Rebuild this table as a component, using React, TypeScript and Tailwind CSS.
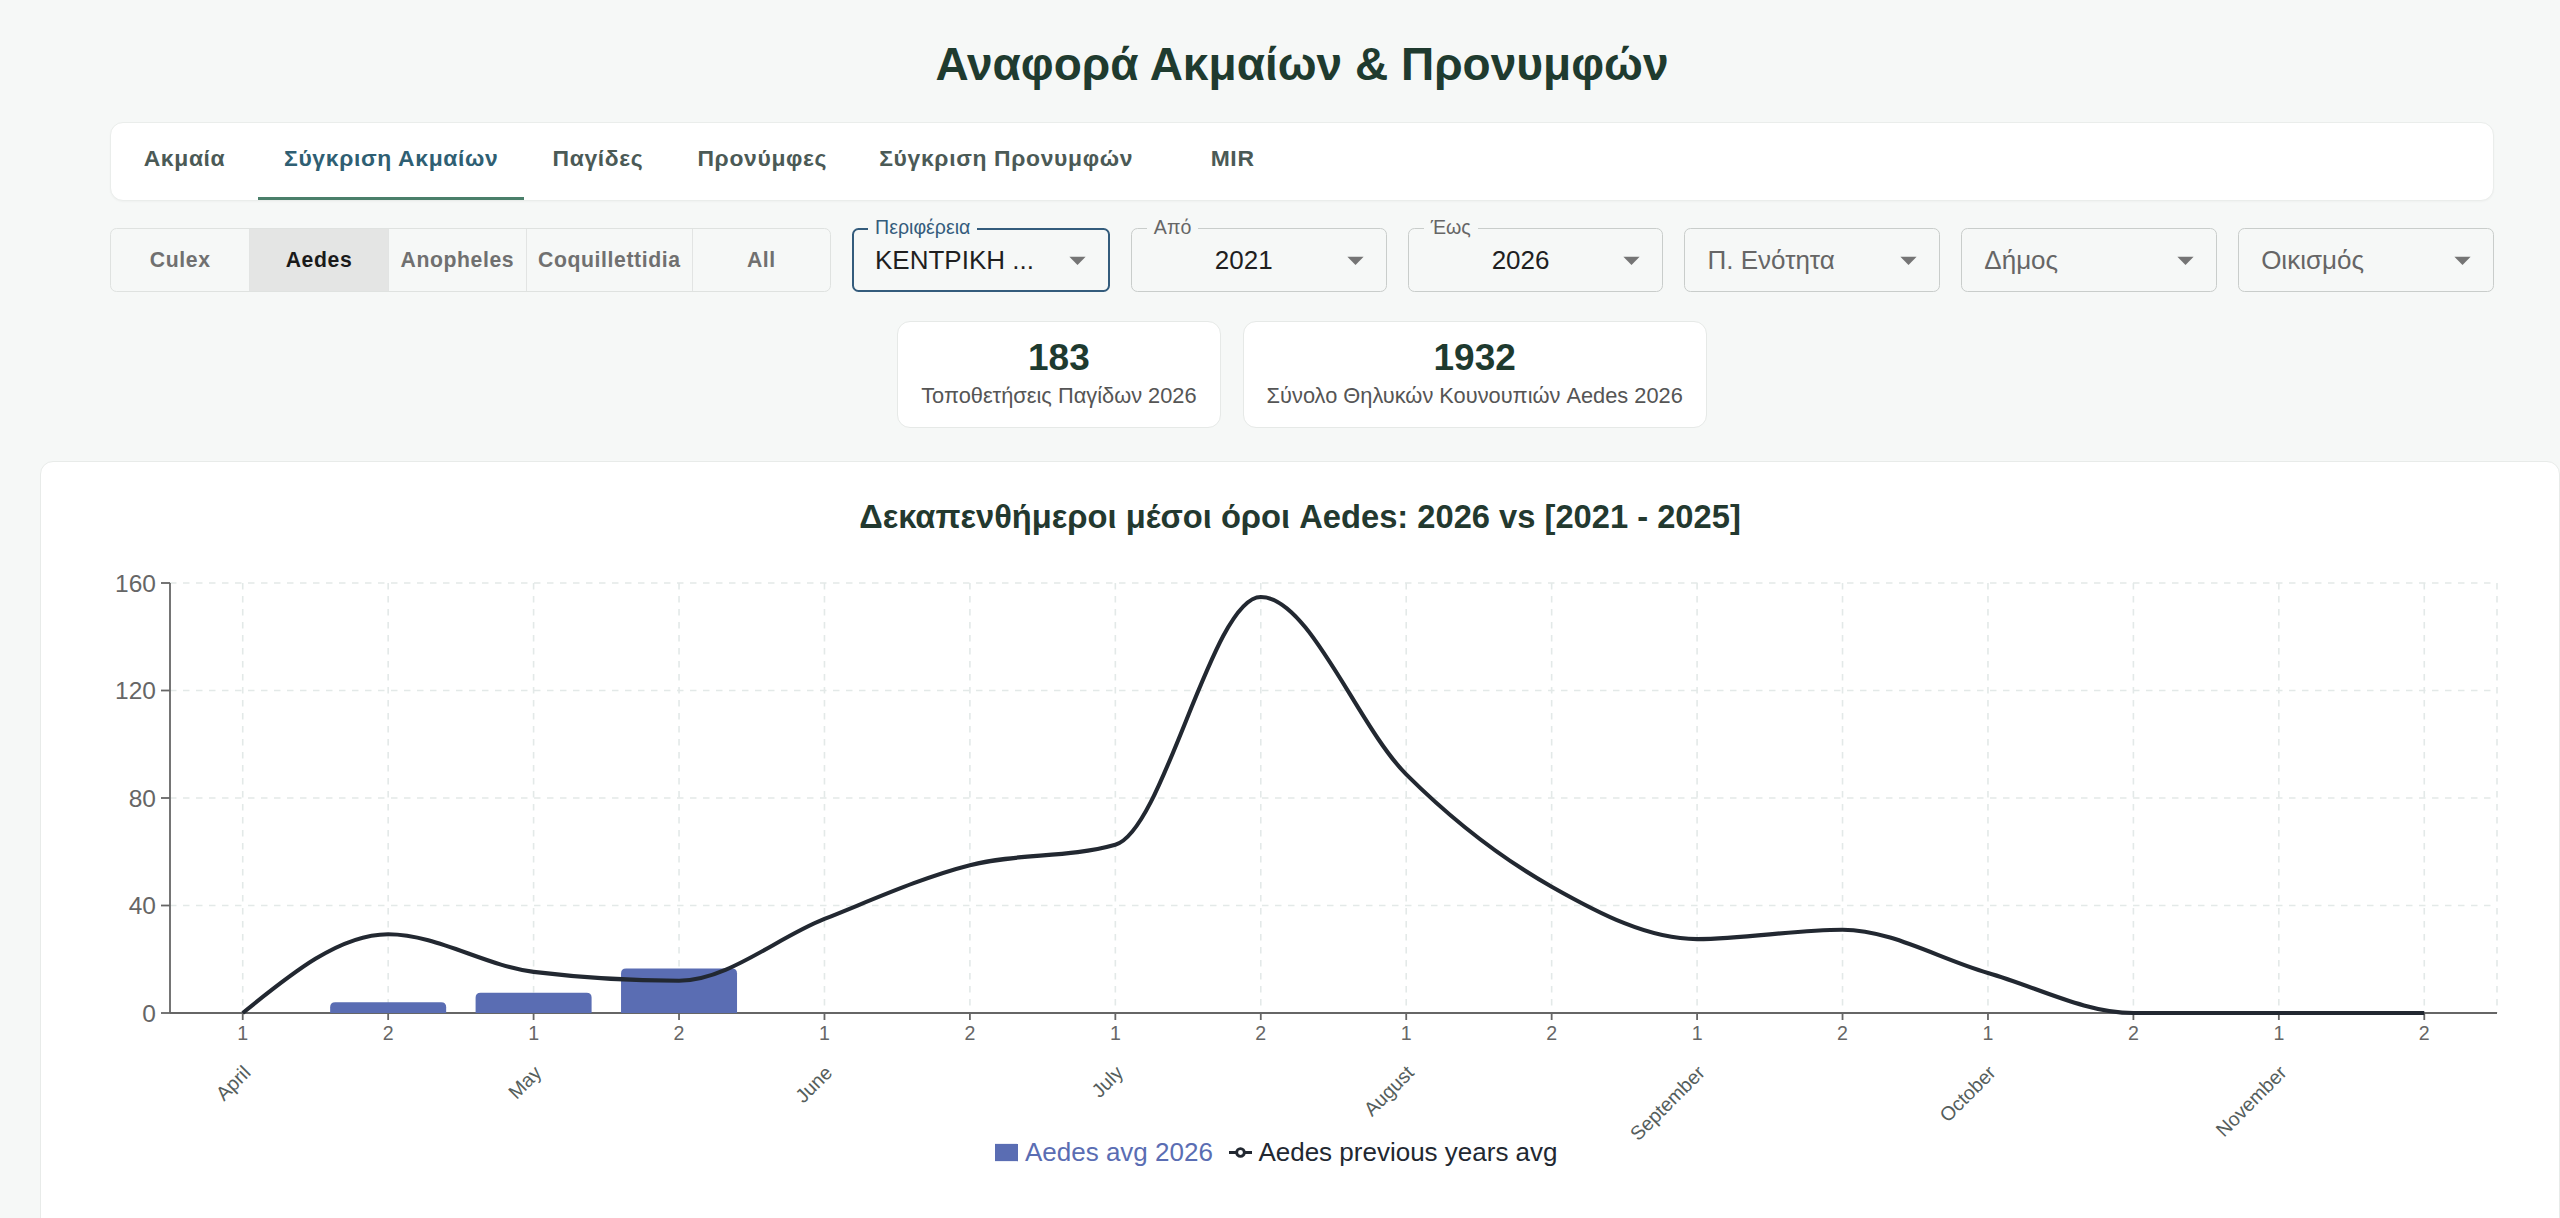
import React from "react";

const TABS = ["Ακμαία", "Σύγκριση Ακμαίων", "Παγίδες", "Προνύμφες", "Σύγκριση Προνυμφών", "MIR"];
const SPECIES = ["Culex", "Aedes", "Anopheles", "Coquillettidia", "All"];

const LINE = [0, 29.3, 15.3, 12, 35, 55, 62.6, 154.8, 88.8, 47, 27.5, 31, 14.9, 0, 0, 0];
const BARS: Record<number, number> = { 1: 4.0, 2: 7.5, 3: 16.6 };
const MONTHS = ["April", "May", "June", "July", "August", "September", "October", "November"];

const PL = 129;
const PR = 2456;
const PT = 43;
const PB = 473;
const STEP = (PR - PL) / 16;
const cx = (k: number) => PL + STEP / 2 + STEP * k;
const vy = (v: number) => PB - v * ((PB - PT) / 160);

function sgn(x: number) {
  return x < 0 ? -1 : 1;
}

function monotone(xs: number[], ys: number[]) {
  const n = xs.length;
  const s: number[] = [];
  for (let i = 0; i < n - 1; i++) s[i] = (ys[i + 1] - ys[i]) / (xs[i + 1] - xs[i]);
  const m: number[] = new Array(n).fill(0);
  for (let i = 1; i < n - 1; i++) {
    const h0 = xs[i] - xs[i - 1];
    const h1 = xs[i + 1] - xs[i];
    const p = (s[i - 1] * h1 + s[i] * h0) / (h0 + h1);
    m[i] = (sgn(s[i - 1]) + sgn(s[i])) * Math.min(Math.abs(s[i - 1]), Math.abs(s[i]), 0.5 * Math.abs(p)) || 0;
  }
  m[0] = (3 * s[0] - m[1]) / 2;
  m[n - 1] = (3 * s[n - 2] - m[n - 2]) / 2;
  let d = `M${xs[0]},${ys[0]}`;
  for (let i = 0; i < n - 1; i++) {
    const dx = (xs[i + 1] - xs[i]) / 3;
    d += `C${xs[i] + dx},${ys[i] + dx * m[i]},${xs[i + 1] - dx},${ys[i + 1] - dx * m[i + 1]},${xs[i + 1]},${ys[i + 1]}`;
  }
  return d;
}

function barPath(x: number, y: number, w: number, h: number, r: number) {
  const rr = Math.min(r, h, w / 2);
  return `M${x},${y + h}L${x},${y + rr}Q${x},${y} ${x + rr},${y}L${x + w - rr},${y}Q${x + w},${y} ${x + w},${y + rr}L${x + w},${y + h}Z`;
}

function Select({
  label,
  value,
  placeholder,
  focused,
  center,
}: {
  label?: string;
  value: string;
  placeholder?: boolean;
  focused?: boolean;
  center?: boolean;
}) {
  return (
    <div
      className={`relative flex-1 h-[64px] rounded-[6.5px] flex items-center ${
        focused ? "border-2 border-[#345c7c]" : "border border-[#c9cdcb]"
      }`}
    >
      {label && (
        <span
          className={`absolute bg-[#f6f8f7] px-[7px] text-[19.6px] leading-[20px] ${
            focused ? "-top-[13px] left-[14px] text-[#345c7c]" : "-top-[12px] left-[15px] text-[#666666]"
          }`}
        >
          {label}
        </span>
      )}
      <div
        className={`flex-1 min-w-0 pr-[52px] text-[26px] leading-[30px] whitespace-nowrap overflow-hidden ${
          focused ? "pl-[21px]" : "pl-[22px]"
        } ${center ? "text-center" : ""} ${placeholder ? "text-[#666666]" : "text-[#1f1f1f]"}`}
      >
        {value}
      </div>
      <svg className="absolute right-[11px] top-1/2 -translate-y-1/2 w-[39px] h-[39px]" viewBox="0 0 24 24">
        <path d="M7 10l5 5 5-5z" fill="#757575" />
      </svg>
    </div>
  );
}

function Stat({ n, label }: { n: string; label: string }) {
  return (
    <div className="bg-white border border-[#e6e9e7] rounded-[13px] px-[23px] pt-[13px] pb-[19px] text-center">
      <div className="text-[37px] leading-[45px] font-bold text-[#1e3a2f]">{n}</div>
      <div className="mt-[4px] text-[21.8px] leading-[24px] text-[#555555] whitespace-nowrap">{label}</div>
    </div>
  );
}

function Chart() {
  const xs = LINE.map((_, k) => cx(k));
  const ys = LINE.map((v) => vy(v));
  const d = monotone(xs, ys);
  const hGrid = [0, 40, 80, 120];
  const yTicks = [0, 40, 80, 120, 160];
  return (
    <svg className="block mt-[3px] overflow-visible" width={2518} height={560} viewBox="0 0 2518 560">
      <g stroke="#e3e9e8" strokeWidth={1.6} strokeDasharray="6.5 6.5" fill="none">
        {hGrid.map((v) => (
          <line key={`h${v}`} x1={PL} x2={PR} y1={vy(v)} y2={vy(v)} />
        ))}
        <line x1={PL} x2={PR} y1={PT} y2={PT} />
        {LINE.map((_, k) => (
          <line key={`v${k}`} x1={cx(k)} x2={cx(k)} y1={PT} y2={PB} />
        ))}
        <line x1={PR} x2={PR} y1={PT} y2={PB} />
      </g>
      <g stroke="#666666" strokeWidth={1.8} fill="none">
        <line x1={PL} x2={PL} y1={PT} y2={PB} />
        <line x1={PL} x2={PR} y1={PB} y2={PB} />
        {yTicks.map((v) => (
          <line key={`yt${v}`} x1={PL - 9} x2={PL} y1={vy(v)} y2={vy(v)} />
        ))}
        {LINE.map((_, k) => (
          <line key={`xt${k}`} x1={cx(k)} x2={cx(k)} y1={PB} y2={PB + 7} />
        ))}
      </g>
      <g fill="#666666" fontFamily="'Liberation Sans', Arial, sans-serif">
        {yTicks.map((v) => (
          <text key={`yl${v}`} x={PL - 14} y={vy(v)} dy="0.355em" textAnchor="end" fontSize={24.5}>
            {v}
          </text>
        ))}
        {LINE.map((_, k) => (
          <text key={`xl${k}`} x={cx(k)} y={500} textAnchor="middle" fontSize={19.6}>
            {k % 2 === 0 ? "1" : "2"}
          </text>
        ))}
        {MONTHS.map((m, i) => {
          const x = cx(i * 2) + 9;
          const y = 534;
          return (
            <text
              key={m}
              x={x}
              y={y}
              textAnchor="end"
              fontSize={19.6}
              fill="#555e5c"
              transform={`rotate(-45, ${x}, ${y})`}
            >
              {m}
            </text>
          );
        })}
      </g>
      {Object.entries(BARS).map(([k, v]) => {
        const x = cx(Number(k)) - 58;
        const y = vy(v);
        return <path key={`b${k}`} d={barPath(x, y, 116, PB - y, 5)} fill="#5a6db3" />;
      })}
      <path d={d} fill="none" stroke="#222831" strokeWidth={4.1} />
    </svg>
  );
}

export default function App() {
  return (
    <div className="h-[1218px] overflow-hidden bg-[#f6f8f7] font-['Liberation_Sans',Arial,sans-serif] pt-[37px]">
      <div className="ml-[110px] w-[2384px]">
        <h1 className="text-center text-[46px] leading-[54px] font-bold text-[#1f3b2f]">
          Αναφορά Ακμαίων &amp; Προνυμφών
        </h1>

        <div className="mt-[31px] h-[79px] bg-white border border-[#eaedeb] rounded-[13px] flex shadow-[0_1px_2px_rgba(0,0,0,0.03)]">
          {TABS.map((t, i) => (
            <div
              key={t}
              className={`relative min-w-[147px] px-[26px] h-full flex items-center justify-center pb-[6px] text-[22.9px] font-bold tracking-[0.65px] whitespace-nowrap ${
                i === 1 ? "text-[#2f5f73]" : "text-[#4b5a56]"
              }`}
            >
              {t}
              {i === 1 && <span className="absolute left-0 right-0 bottom-0 h-[3.5px] bg-[#4a7f6a]" />}
            </div>
          ))}
        </div>

        <div className="mt-[27px] flex gap-[21px]">
          <div className="w-[721px] h-[64px] flex border border-[#dfe2e0] rounded-[6.5px] overflow-hidden shrink-0">
            {SPECIES.map((s, i) => (
              <div
                key={s}
                className={`h-full flex items-center justify-center px-[11px] text-[21.2px] font-bold tracking-[0.6px] whitespace-nowrap ${
                  i === 0 ? "" : "border-l border-[#e2e4e3]"
                } ${i === 3 ? "flex-1" : "w-[139px]"} ${
                  i === 1 ? "bg-[#e4e5e4] text-[#1a1a1a]" : "text-[#707070]"
                }`}
              >
                {s}
              </div>
            ))}
          </div>
          <Select label="Περιφέρεια" value="ΚΕΝΤΡΙΚΗ ..." focused />
          <Select label="Από" value="2021" center />
          <Select label="Έως" value="2026" center />
          <Select value="Π. Ενότητα" placeholder />
          <Select value="Δήμος" placeholder />
          <Select value="Οικισμός" placeholder />
        </div>

        <div className="mt-[29px] flex justify-center gap-[22px]">
          <Stat n="183" label="Τοποθετήσεις Παγίδων 2026" />
          <Stat n="1932" label="Σύνολο Θηλυκών Κουνουπιών Aedes 2026" />
        </div>
      </div>

      <div className="mt-[33px] ml-[40px] w-[2520px] h-[820px] bg-white border border-[#e8ebe9] rounded-[13px]">
        <div className="pt-[35px] text-center text-[32.7px] leading-[40px] font-bold text-[#23392f]">
          Δεκαπενθήμεροι μέσοι όροι Aedes: 2026 vs [2021 - 2025]
        </div>
        <Chart />
        <div className="mt-[37px] pr-[47px] flex justify-center items-center text-[26px] leading-[30px]">
          <svg width={23} height={23} viewBox="0 0 32 32" className="mr-[6.5px]">
            <path d="M0,4h32v24h-32z" fill="#5a6db3" />
          </svg>
          <span className="text-[#5a6db3]">Aedes avg 2026</span>
          <svg width={23} height={23} viewBox="0 0 32 32" className="ml-[16px] mr-[6.5px]">
            <path
              d="M0,16h10.667A5.333,5.333,0,1,1,21.333,16H32M21.333,16A5.333,5.333,0,1,1,10.667,16"
              fill="none"
              stroke="#222831"
              strokeWidth={4}
            />
          </svg>
          <span className="text-[#222831]">Aedes previous years avg</span>
        </div>
      </div>
    </div>
  );
}
